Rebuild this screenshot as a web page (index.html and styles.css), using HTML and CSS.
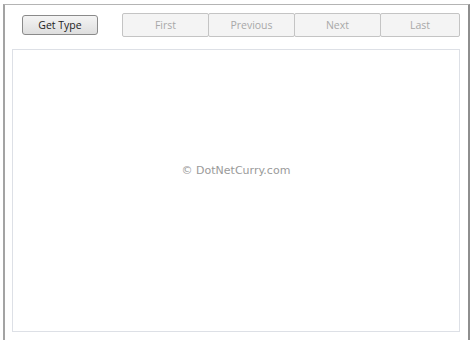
FILE: index.html
```html
<!DOCTYPE html>
<html>
<head>
<meta charset="utf-8">
<link rel="stylesheet" href="styles.css">
</head>
<body>
<div class="window">
  <div class="toolbar">
    <button class="btn-get">Get Type</button>
    <div class="nav">
      <button class="nav-btn">First</button>
      <button class="nav-btn">Previous</button>
      <button class="nav-btn">Next</button>
      <button class="nav-btn">Last</button>
    </div>
  </div>
  <div class="panel">
    <span class="watermark">© DotNetCurry.com</span>
  </div>
</div>
</body>
</html>
```
FILE: styles.css
```css
html, body {
  margin: 0;
  padding: 0;
  background: #ffffff;
  width: 474px;
  height: 342px;
  overflow: hidden;
}
body {
  padding: 4px 4px 2px 3px;
  box-sizing: border-box;
  font-family: "Open Sans", "Liberation Sans", sans-serif;
}
.window {
  height: 100%;
  box-sizing: border-box;
  border-left: 2px solid #a3a3a3;
  border-top: 1px solid #b4b4b4;
  border-right: 2px solid #8e8e8e;
  background: #ffffff;
  padding: 8px 7px 8px 7px;
  display: flex;
  flex-direction: column;
}
.toolbar {
  display: flex;
  align-items: flex-start;
  height: 36px;
}
.btn-get {
  margin-top: 2px;
  margin-left: 10px;
  width: 76px;
  height: 20px;
  border: 1px solid #8a8a8a;
  border-radius: 3px;
  background: linear-gradient(#f4f4f4, #dedede);
  font-family: "Open Sans", "Liberation Sans", sans-serif;
  font-size: 10.5px;
  color: #222;
  padding: 0;
}
.nav {
  margin-left: 24px;
  display: flex;
}
.nav-btn {
  width: 87px;
  height: 24px;
  border: 1px solid #c4c4c4;
  border-radius: 2px;
  background: #f4f4f4;
  color: #a8a8a8;
  font-family: "Open Sans", "Liberation Sans", sans-serif;
  font-size: 10.5px;
  padding: 0;
  margin-right: -1px;
}
.nav-btn:last-child {
  width: 80px;
}
.panel {
  flex: 1;
  border: 1px solid #dde0e6;
  display: flex;
  align-items: flex-start;
  justify-content: center;
  margin-right: 1px;
}
.watermark {
  font-family: "DejaVu Sans", sans-serif;
  font-size: 11px;
  color: #9a9a9a;
  margin-top: 114px;
}
```
